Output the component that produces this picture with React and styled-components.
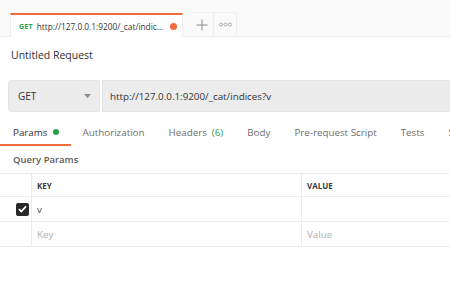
import React from 'react';
import styled, {createGlobalStyle} from 'styled-components';

const GlobalStyle = createGlobalStyle`
    html, body {
        margin: 0;
        padding: 0;
        background: #ffffff;
    }
    body {
        font-family: "Open Sans", "Liberation Sans", sans-serif;
        color: #505050;
    }
`;

const Page = styled.div`
    width: 450px;
    height: 300px;
    overflow: hidden;
    background: #ffffff;
`;

const TabBar = styled.div`
    height: 37px;
    box-sizing: border-box;
    display: flex;
    align-items: flex-end;
    padding-left: 10px;
    background: #fafafa;
    border-bottom: 1px solid #ededed;
`;

const RequestTab = styled.div`
    width: 173px;
    height: 24px;
    box-sizing: border-box;
    display: flex;
    align-items: center;
    gap: 4px;
    padding: 0 5px 0 8px;
    margin-bottom: -1px;
    background: #ffffff;
    border-top: 2px solid #f26b3a;
    border-left: 1px solid #ededed;
    border-right: 1px solid #ededed;
`;

const Method = styled.span`
    font-size: 7px;
    font-weight: 700;
    color: #27a45c;
    letter-spacing: 0.2px;
`;

const TabUrl = styled.span`
    flex: 1;
    font-size: 8.3px;
    color: #333333;
    white-space: nowrap;
`;

const Dot = styled.span`
    width: ${p => p.size || 7}px;
    height: ${p => p.size || 7}px;
    border-radius: 50%;
    background: ${p => p.color};
    flex-shrink: 0;
`;

const IconTab = styled.div`
    width: ${p => p.w}px;
    height: 24px;
    box-sizing: border-box;
    display: flex;
    align-items: center;
    justify-content: center;
    margin-left: ${p => p.gap || 0}px;
    border-right: 1px solid #ededed;
    border-top: 1px solid #f0f0f0;
    color: #8a8a8a;
`;

const Title = styled.div`
    font-size: 10.5px;
    color: #303030;
    padding: 11px 11px 0;
    height: 33px;
    box-sizing: border-box;
`;

const RequestBar = styled.div`
    display: flex;
    margin-top: 10px;
    margin-left: 8px;
    width: 560px;
    height: 32px;
`;

const MethodSelect = styled.div`
    width: 92px;
    box-sizing: border-box;
    display: flex;
    align-items: center;
    justify-content: space-between;
    padding: 0 8px 0 9px;
    background: #ececec;
    border: 1px solid #e4e4e4;
    border-radius: 3px 0 0 3px;
    font-size: 10px;
    color: #333333;
`;

const UrlField = styled.div`
    flex: 1;
    display: flex;
    align-items: center;
    padding-left: 7px;
    margin-left: 2px;
    background: #ececec;
    border: 1px solid #e4e4e4;
    font-size: 9.8px;
    color: #333333;
`;

const Tabs = styled.div`
    display: flex;
    margin-top: 8px;
    height: 26px;
    white-space: nowrap;
`;

const Tab = styled.div`
    display: flex;
    align-items: center;
    gap: 5px;
    padding: 0 12px;
    font-size: 9.8px;
    color: ${p => p.active ? '#333333' : '#6e6e6e'};
    border-bottom: 2px solid ${p => p.active ? '#f26b3a' : 'transparent'};
    box-sizing: border-box;

    &:first-child {
        padding-left: 13px;
    }
`;

const Count = styled.span`
    color: #26a34a;
`;

const SectionLabel = styled.div`
    font-size: 9.5px;
    font-weight: 600;
    color: #5c5c5c;
    padding: 7px 13px 0;
    height: 27px;
    box-sizing: border-box;
`;

const Table = styled.div`
    border-top: 1px solid #ececec;
    width: 600px;
`;

const Row = styled.div`
    display: grid;
    grid-template-columns: 32px 270px 1fr;
    height: ${p => p.h}px;
    border-bottom: 1px solid #ececec;
`;

const Cell = styled.div`
    display: flex;
    align-items: center;
    padding-left: ${p => p.check ? 16 : 5}px;
    border-right: 1px solid #ececec;
    font-size: ${p => p.head ? 8 : 9.8}px;
    font-weight: ${p => p.head ? 700 : 400};
    color: ${p => p.muted ? '#b0b0b0' : p.head ? '#3c3c3c' : '#505050'};
`;

const CheckBox = styled.div`
    width: 13px;
    height: 13px;
    border-radius: 2px;
    background: #282828;
    display: flex;
    align-items: center;
    justify-content: center;
`;

export default function App() {
    return (
        <Page>
            <GlobalStyle/>
            <TabBar>
                <RequestTab>
                    <Method>GET</Method>
                    <TabUrl>http://127.0.0.1:9200/_cat/indic...</TabUrl>
                    <Dot color="#f26b3a"/>
                </RequestTab>
                <IconTab w={24} gap={7}>
                    <svg width="12" height="12" viewBox="0 0 12 12">
                        <path d="M6 0.5v11M0.5 6h11" stroke="#8a8a8a" strokeWidth="1" fill="none"/>
                    </svg>
                </IconTab>
                <IconTab w={23}>
                    <svg width="13" height="5" viewBox="0 0 13 5">
                        <circle cx="2" cy="2.5" r="1.5" stroke="#9a9a9a" strokeWidth="0.8" fill="none"/>
                        <circle cx="6.5" cy="2.5" r="1.5" stroke="#9a9a9a" strokeWidth="0.8" fill="none"/>
                        <circle cx="11" cy="2.5" r="1.5" stroke="#9a9a9a" strokeWidth="0.8" fill="none"/>
                    </svg>
                </IconTab>
            </TabBar>
            <Title>Untitled Request</Title>
            <RequestBar>
                <MethodSelect>
                    GET
                    <svg width="7" height="4" viewBox="0 0 7 4">
                        <path d="M0 0h7L3.5 4z" fill="#8a8a8a"/>
                    </svg>
                </MethodSelect>
                <UrlField>http://127.0.0.1:9200/_cat/indices?v</UrlField>
            </RequestBar>
            <Tabs>
                <Tab active>Params <Dot color="#26a34a" size={6}/></Tab>
                <Tab>Authorization</Tab>
                <Tab>Headers <Count>(6)</Count></Tab>
                <Tab>Body</Tab>
                <Tab>Pre-request Script</Tab>
                <Tab>Tests</Tab>
                <Tab>Settings</Tab>
            </Tabs>
            <SectionLabel>Query Params</SectionLabel>
            <Table>
                <Row h={22}>
                    <Cell check/>
                    <Cell head>KEY</Cell>
                    <Cell head>VALUE</Cell>
                </Row>
                <Row h={24}>
                    <Cell check>
                        <CheckBox>
                            <svg width="9" height="8" viewBox="0 0 9 8">
                                <path d="M1 4.2l2.3 2.3L8 1.3" stroke="#ffffff" strokeWidth="1.8" fill="none"/>
                            </svg>
                        </CheckBox>
                    </Cell>
                    <Cell>v</Cell>
                    <Cell/>
                </Row>
                <Row h={24}>
                    <Cell check/>
                    <Cell muted>Key</Cell>
                    <Cell muted>Value</Cell>
                </Row>
            </Table>
        </Page>
    );
}
